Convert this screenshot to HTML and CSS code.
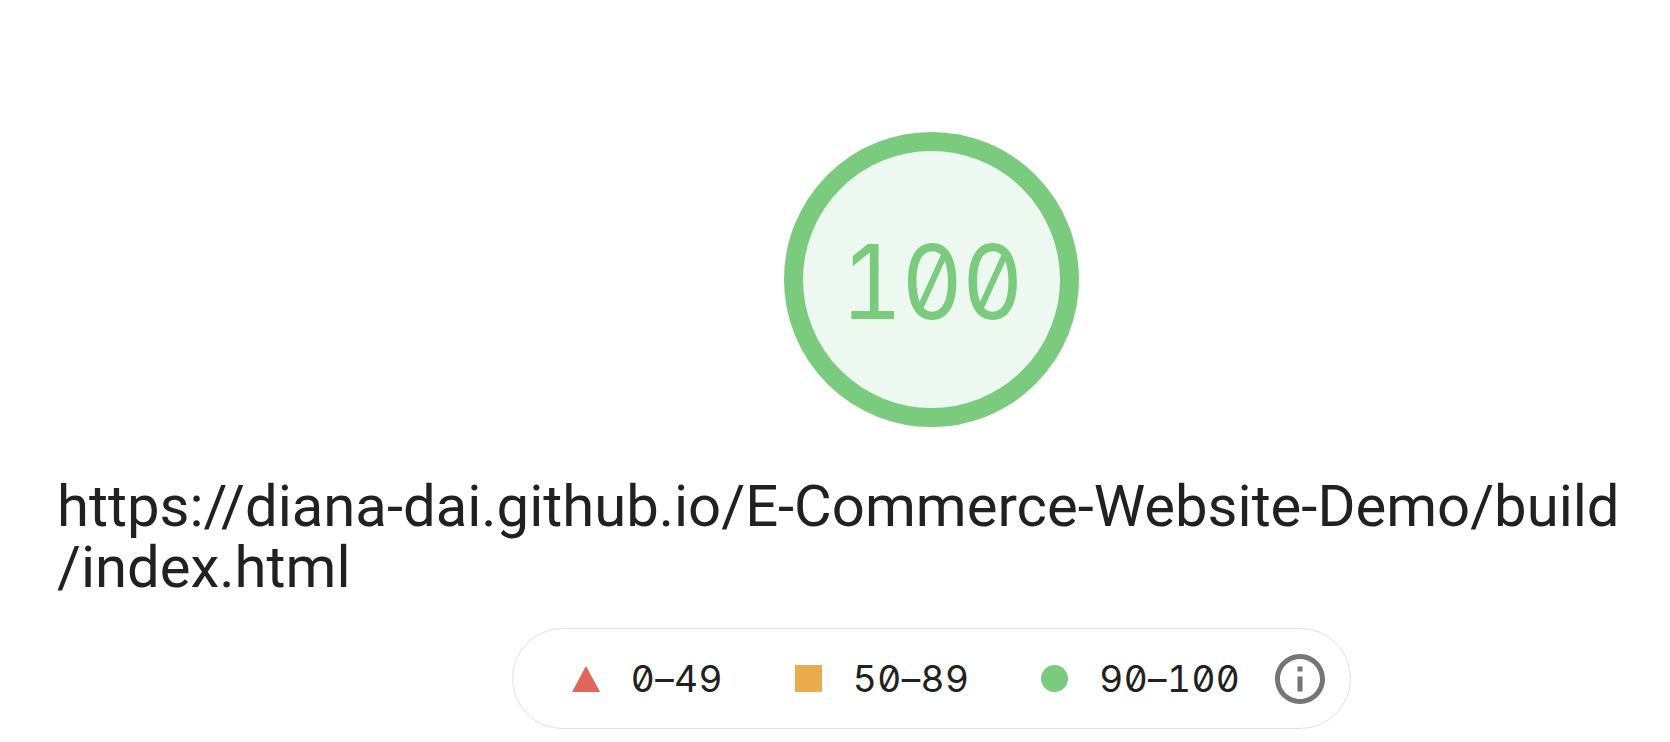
FILE: index.html
```html
<!DOCTYPE html>
<html>
<head>
<meta charset="utf-8">
<link rel="stylesheet" href="styles.css">
</head>
<body>
<div class="report">
  <div class="gauge-row">
    <div class="gauge"><span class="gauge-value">100</span></div>
  </div>
  <div class="url">
    <span class="url-line">https://diana-dai.github.io/E-Commerce-Website-Demo/build</span>
    <span class="url-line">/index.html</span>
  </div>
  <div class="scale-row">
    <div class="scale">
      <span class="item"><span class="shape triangle"></span><span class="range">0–49</span></span>
      <span class="item"><span class="shape square"></span><span class="range">50–89</span></span>
      <span class="item"><span class="shape dot"></span><span class="range">90–100</span></span>
      <svg class="info" viewBox="0 0 24 24" width="60" height="60"><path fill="#757575" d="M11 7h2v2h-2zm0 4h2v6h-2zm1-9C6.48 2 2 6.48 2 12s4.48 10 10 10 10-4.48 10-10S17.52 2 12 2zm0 18c-4.41 0-8-3.59-8-8s3.59-8 8-8 8 3.59 8 8-3.59 8-8 8z"/></svg>
    </div>
  </div>
</div>
</body>
</html>
```
FILE: styles.css
```css
html, body {
  margin: 0;
  padding: 0;
  background: #ffffff;
}
.report {
  width: 1670px;
  height: 742px;
  overflow: hidden;
  font-family: Roboto, "Liberation Sans", sans-serif;
  color: #212121;
}
.gauge-row {
  display: flex;
  justify-content: center;
  padding-left: 193px;
  padding-top: 132px;
}
.gauge {
  box-sizing: border-box;
  width: 295px;
  height: 295px;
  border: 19px solid #7bcb7f;
  border-radius: 50%;
  background: #edf8f0;
  display: flex;
  align-items: center;
  justify-content: center;
}
.gauge-value {
  font-family: Inter, "DejaVu Sans Mono", monospace;
  font-feature-settings: "zero" 1, "tnum" 1;
  font-weight: 400;
  font-size: 103px;
  line-height: 1;
  color: #7bcb7f;
  letter-spacing: -1px;
  display: inline-block;
  transform: scaleX(0.92);
  margin-top: 4px;
}
.url {
  margin-top: 49px;
  padding-left: 57px;
  font-size: 58px;
  line-height: 61px;
}
.url-line {
  display: block;
  white-space: nowrap;
}
.scale-row {
  display: flex;
  justify-content: center;
  padding-left: 193px;
  margin-top: 30px;
}
.scale {
  box-sizing: border-box;
  height: 101px;
  border: 1px solid #e0e0e0;
  border-radius: 51px;
  display: flex;
  align-items: center;
  padding: 0 20px 0 59px;
  font-family: Inter, "DejaVu Sans Mono", monospace;
  font-feature-settings: "zero" 1, "tnum" 1;
  font-size: 37px;
  color: #212121;
}
.range {
  letter-spacing: 0.4px;
}
.item {
  display: flex;
  align-items: center;
  margin-right: 72px;
}
.item:nth-child(3) {
  margin-right: 30px;
}
.shape {
  display: inline-block;
  margin-right: 31px;
}
.triangle {
  width: 0;
  height: 0;
  border-left: 14.5px solid transparent;
  border-right: 14.5px solid transparent;
  border-bottom: 26px solid #e0665a;
}
.square {
  width: 27px;
  height: 27px;
  background: #e8ab4e;
}
.dot {
  width: 27px;
  height: 27px;
  border-radius: 50%;
  background: #7bcb7f;
}
.info {
  display: block;
}
```
